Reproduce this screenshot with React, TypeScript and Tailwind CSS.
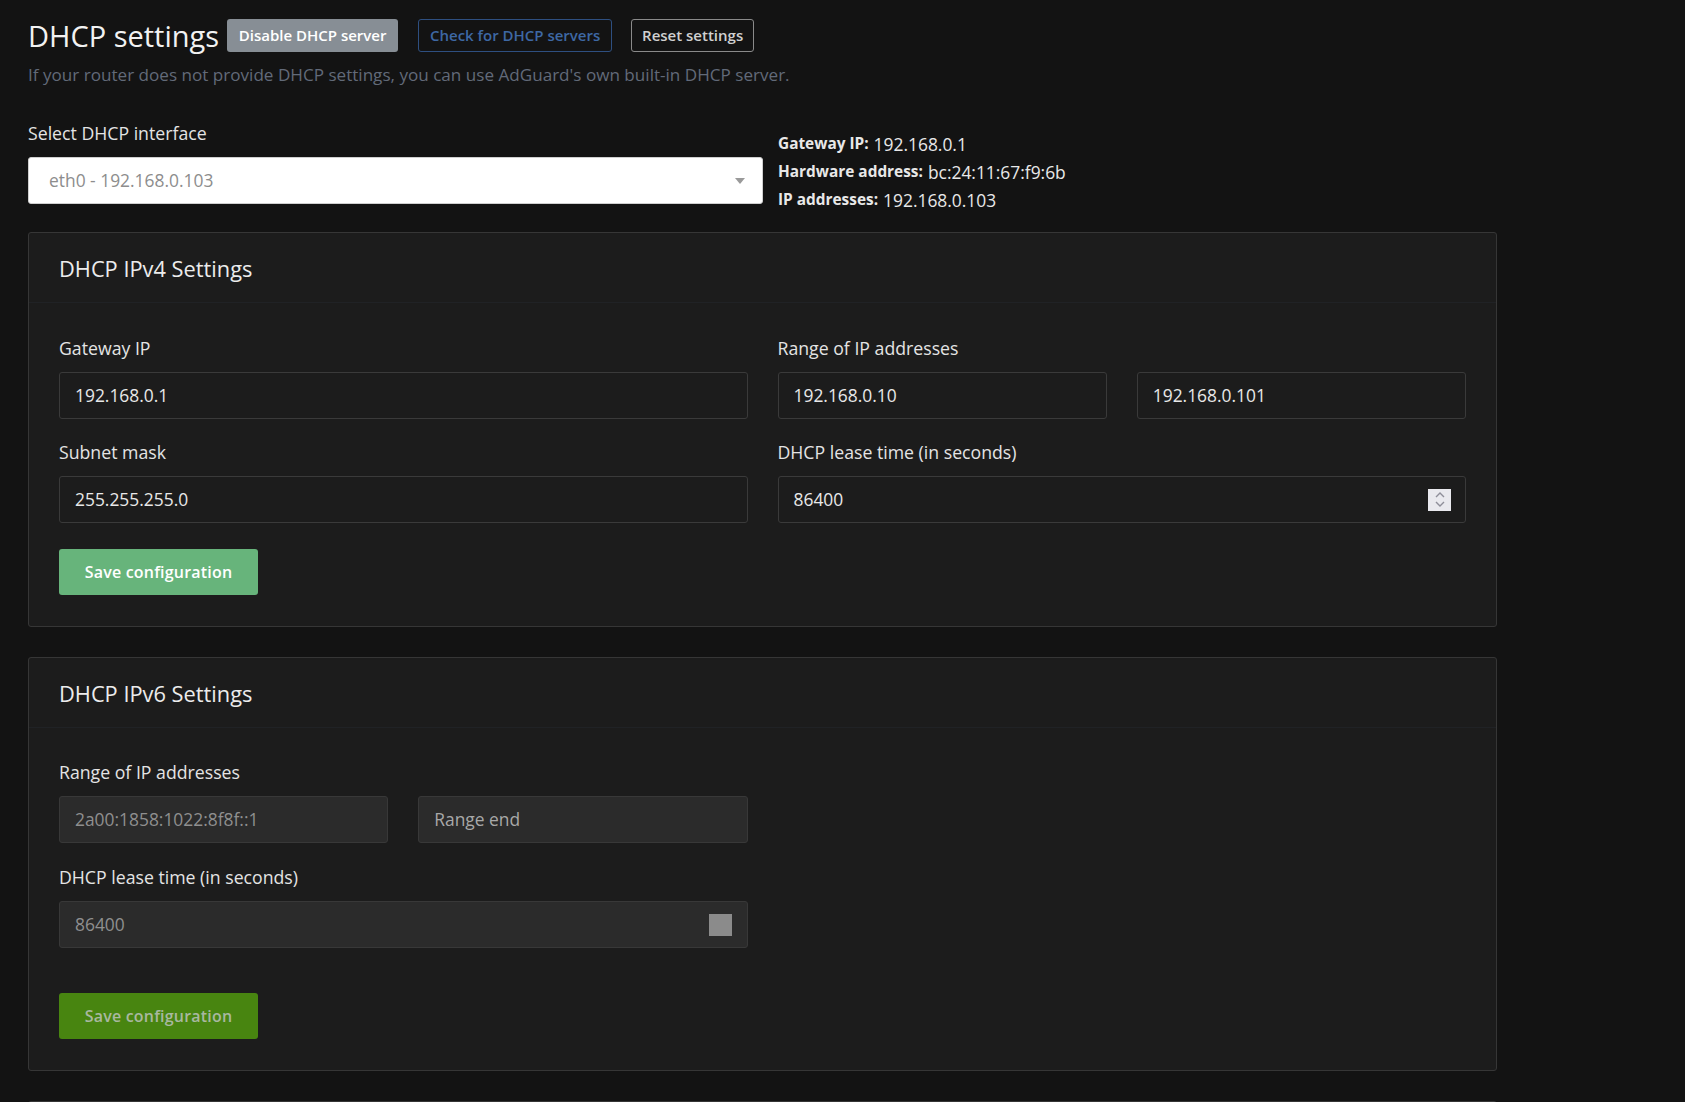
import React from "react";

function Label({ children }: { children: React.ReactNode }) {
  return <div className="text-[17.7px] leading-[24px] text-[#e4e4e4] mb-[12px]">{children}</div>;
}

function TextInput({ value, disabled, muted }: { value: string; disabled?: boolean; muted?: boolean }) {
  return (
    <div
      className={
        "h-[47px] w-full rounded-[3px] border flex items-center pl-[15px] text-[17.4px] " +
        (disabled
          ? "bg-[#2b2b2b] border-[#383838] text-[#8f8f8f]"
          : "bg-[#1c1c1c] border-[#3a3a3a] text-[#e8e8e8]")
      }
    >
      <span className={muted ? "text-[#a8a8a8]" : ""}>{value}</span>
    </div>
  );
}

function Spinner() {
  return (
    <div className="w-[23px] h-[22px] bg-[#e9e9ee] flex flex-col items-center justify-center gap-[3px]">
      <svg width="10" height="6" viewBox="0 0 10 6">
        <path d="M1 5 L5 1 L9 5" stroke="#8e8e99" strokeWidth="1.4" fill="none" />
      </svg>
      <svg width="10" height="6" viewBox="0 0 10 6">
        <path d="M1 1 L5 5 L9 1" stroke="#8e8e99" strokeWidth="1.4" fill="none" />
      </svg>
    </div>
  );
}

function CardHeader({ title }: { title: string }) {
  return (
    <div className="h-[70px] flex items-center px-[30px] border-b border-[#202225]">
      <h3 className="text-[21.8px] text-[#ececec] leading-none mt-[3px]">{title}</h3>
    </div>
  );
}

export default function App() {
  return (
    <div className="min-h-screen bg-[#131313] font-['Open_Sans',sans-serif] overflow-hidden">
      <div className="pl-[28px] pt-[14px] w-[1497px]">
        {/* Header */}
        <div className="flex items-center h-[42px]">
          <h1 className="text-[29px] leading-[40px] text-[#f2f2f2] mr-[8px] mt-[2px]">DHCP settings</h1>
          <button className="h-[33px] w-[171px] rounded-[3px] bg-[#878e95] text-white text-[15px] font-semibold">
            Disable DHCP server
          </button>
          <button className="ml-[20px] h-[33px] w-[194px] rounded-[3px] border border-[#2e4f80] text-[#3e68a4] text-[15px] font-semibold">
            Check for DHCP servers
          </button>
          <button className="ml-[19px] h-[33px] w-[123px] rounded-[3px] border border-[#8a8a8a] text-[#d0d0d0] text-[15px] font-semibold">
            Reset settings
          </button>
        </div>
        <p className="mt-[8px] text-[17.1px] leading-[22px] text-[#626a79]">
          If your router does not provide DHCP settings, you can use AdGuard's own built-in DHCP server.
        </p>

        {/* Interface row */}
        <div className="mt-[35px] flex gap-[15px] items-start">
          <div className="w-[735px]">
            <Label>Select DHCP interface</Label>
            <div className="h-[47px] w-full bg-white rounded-[3px] border border-[#cfcfcf] flex items-center justify-between pl-[20px] pr-[17px]">
              <span className="text-[17.4px] text-[#8d8d8d]">eth0 - 192.168.0.103</span>
              <svg width="10" height="6" viewBox="0 0 10 6">
                <path d="M0 0 L10 0 L5 6 Z" fill="#9a9a9a" />
              </svg>
            </div>
          </div>
          <div className="pt-[9px] text-[#e8e8e8]">
            <div className="h-[28px] flex items-center">
              <span className="font-bold text-[15.4px] mr-[5px]">Gateway IP:</span>
              <span className="text-[17.4px]">192.168.0.1</span>
            </div>
            <div className="h-[28px] flex items-center">
              <span className="font-bold text-[15.4px] mr-[5px]">Hardware address:</span>
              <span className="text-[17.4px]">bc:24:11:67:f9:6b</span>
            </div>
            <div className="h-[28px] flex items-center">
              <span className="font-bold text-[15.4px] mr-[5px]">IP addresses:</span>
              <span className="text-[17.4px]">192.168.0.103</span>
            </div>
          </div>
        </div>

        {/* IPv4 card */}
        <div className="mt-[18px] w-[1469px] bg-[#1c1c1c] border border-[#363636] rounded-[3px]">
          <CardHeader title="DHCP IPv4 Settings" />
          <div className="px-[30px] pt-[33px] pb-[31px]">
            <div className="grid grid-cols-2 gap-x-[30px]">
              <div>
                <Label>Gateway IP</Label>
                <TextInput value="192.168.0.1" />
                <div className="mt-[21px]">
                  <Label>Subnet mask</Label>
                  <TextInput value="255.255.255.0" />
                </div>
              </div>
              <div>
                <Label>Range of IP addresses</Label>
                <div className="grid grid-cols-2 gap-x-[30px]">
                  <TextInput value="192.168.0.10" />
                  <TextInput value="192.168.0.101" />
                </div>
                <div className="mt-[21px]">
                  <Label>DHCP lease time (in seconds)</Label>
                  <div className="h-[47px] w-full rounded-[3px] border bg-[#1c1c1c] border-[#3a3a3a] text-[#e8e8e8] flex items-center justify-between pl-[15px] pr-[14px] text-[17.4px]">
                    <span>86400</span>
                    <Spinner />
                  </div>
                </div>
              </div>
            </div>
            <button className="mt-[26px] h-[46px] w-[199px] rounded-[3px] bg-[#67b47b] text-white text-[16px] font-semibold tracking-[0.2px]">
              Save configuration
            </button>
          </div>
        </div>

        {/* IPv6 card */}
        <div className="mt-[30px] w-[1469px] bg-[#1c1c1c] border border-[#363636] rounded-[3px]">
          <CardHeader title="DHCP IPv6 Settings" />
          <div className="px-[30px] pt-[32px] pb-[31px]">
            <div className="grid grid-cols-2 gap-x-[30px]">
              <div>
                <Label>Range of IP addresses</Label>
                <div className="grid grid-cols-2 gap-x-[30px]">
                  <TextInput value="2a00:1858:1022:8f8f::1" disabled />
                  <TextInput value="Range end" disabled muted />
                </div>
                <div className="mt-[22px]">
                  <Label>DHCP lease time (in seconds)</Label>
                  <div className="h-[47px] w-full rounded-[3px] border bg-[#2b2b2b] border-[#383838] text-[#8f8f8f] flex items-center justify-between pl-[15px] pr-[15px] text-[17.4px]">
                    <span>86400</span>
                    <div className="w-[23px] h-[22px] bg-[#8b8b8b]" />
                  </div>
                </div>
              </div>
              <div />
            </div>
            <button className="mt-[45px] h-[46px] w-[199px] rounded-[3px] bg-[#488510] text-[#a9b8a0] text-[16px] font-semibold tracking-[0.2px]">
              Save configuration
            </button>
          </div>
        </div>

        {/* Next card (partially visible) */}
        <div className="mt-[30px] w-[1469px] h-[200px] bg-[#1c1c1c] border border-[#363636] rounded-[3px]" />
      </div>
    </div>
  );
}
